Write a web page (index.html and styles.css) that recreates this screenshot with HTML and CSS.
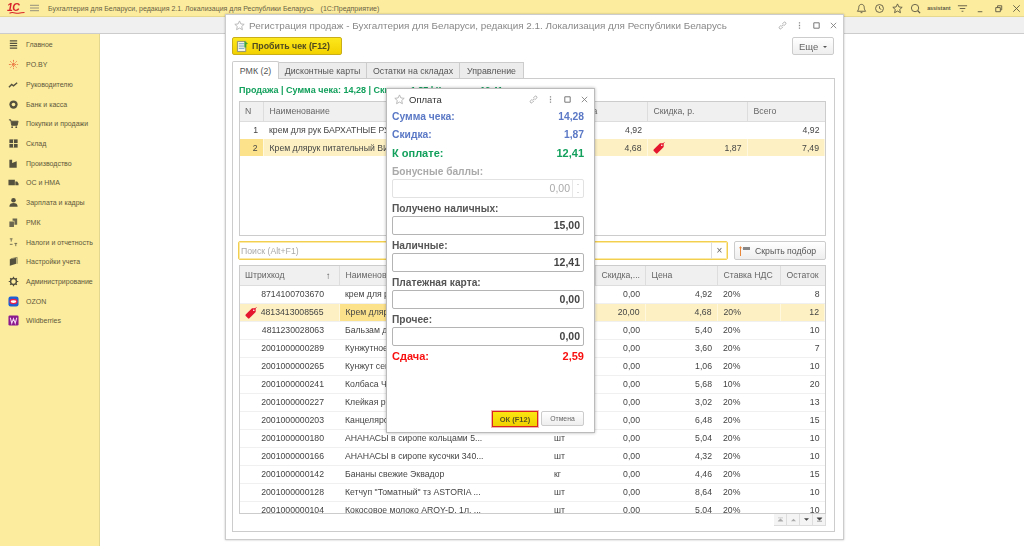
FILE: index.html
```html
<!DOCTYPE html>
<html lang="ru">
<head>
<meta charset="utf-8">
<title>Бухгалтерия для Беларуси</title>
<link rel="stylesheet" href="styles.css">
</head>
<body>
<svg class="defs" width="0" height="0">
  <defs>
    <symbol id="star" viewBox="0 0 12 12"><path d="M6 1l1.500 3.300 3.600.4-2.700 2.400.8 3.500L6 8.800l-3.200 1.800.8-3.500L.9 4.700l3.600-.4z" fill="none" stroke="#b5b5b5"/></symbol>
    <symbol id="link" viewBox="0 0 10 10"><path d="M4 6.200L6.200 4M3.600 4.600L1.700 6.500a1.300 1.300 0 0 0 1.900 1.900l1.900-1.900M4.600 3.500l1.900-1.900a1.300 1.300 0 0 1 1.900 1.900L6.500 5.400" fill="none" stroke="#a0a0a0" stroke-width=".9"/></symbol>
    <symbol id="more" viewBox="0 0 10 10"><path d="M4.300 1.500h1.400v1.400H4.300zM4.300 4.300h1.400v1.400H4.300zM4.300 7.100h1.400v1.400H4.300z" fill="#888"/></symbol>
    <symbol id="max" viewBox="0 0 10 10"><path d="M2 2h6v6H2z" fill="none" stroke="#777" stroke-width="1.100"/></symbol>
    <symbol id="close" viewBox="0 0 10 10"><path d="M2 2l6 6M8 2l-6 6" fill="none" stroke="#777" stroke-width=".9"/></symbol>
    <symbol id="tag" viewBox="0 0 12 12"><path d="M.7 7.600L7 1.300h3.700V5L4.400 11.300a1 1 0 0 1-1.400 0L.7 9a1 1 0 0 1 0-1.400z" fill="#e4172f"/><path d="M9 2.500L11.600.4" stroke="#e4172f" fill="none" stroke-width=".8"/><circle cx="8.800" cy="3.200" r=".8" fill="#fff"/></symbol>
  </defs>
</svg>

<header class="topbar">
  <div class="logo"><span class="logo-text">1С</span><svg class="logo-wave" viewBox="0 0 20 4"><path d="M0 3c5-3 8 1 12 0s5-1 8-1" fill="none" stroke="#d8232a" stroke-width="1.400"/></svg></div>
  <svg class="burger" viewBox="0 0 10 8"><path d="M0 1h10M0 4h10M0 7h10" stroke="#8a8678" stroke-width="1"/></svg>
  <span class="app-title">Бухгалтерия для Беларуси, редакция 2.1. Локализация для Республики Беларусь</span>
  <span class="app-sub">(1С:Предприятие)</span>
  <div class="top-tools">
    <svg class="ti" viewBox="0 0 12 12"><path d="M6 1.500c2 0 3 1.500 3 3.500 0 2 .8 3 1.500 4h-9c.7-1 1.500-2 1.500-4s1-3.500 3-3.500zM5 10.500h2" fill="none" stroke="#5f5a45"/></svg>
    <svg class="ti" viewBox="0 0 12 12"><circle cx="6" cy="6" r="4.300" fill="none" stroke="#5f5a45"/><path d="M6 3.500V6l2 1" fill="none" stroke="#5f5a45"/></svg>
    <svg class="ti" viewBox="0 0 12 12"><path d="M6 1l1.500 3.300 3.600.4-2.700 2.400.8 3.500L6 8.800l-3.200 1.800.8-3.500L.9 4.700l3.600-.4z" fill="none" stroke="#5f5a45"/></svg>
    <svg class="ti" viewBox="0 0 12 12"><circle cx="5.500" cy="5.500" r="4" fill="none" stroke="#5f5a45"/><path d="M8.500 8.500l2.500 2.500" stroke="#5f5a45" stroke-width="1.300"/></svg>
    <span class="user">assistant</span>
    <svg class="ti" viewBox="0 0 12 12"><path d="M1 3h10M3 6h6M5 9h2" stroke="#5f5a45"/></svg>
    <svg class="ti" viewBox="0 0 12 12"><path d="M3 9.500h5" stroke="#5f5a45"/></svg>
    <svg class="ti" viewBox="0 0 12 12"><path d="M3 5h5v4.500H3zM5 5V3h4.500v4.500H8" fill="none" stroke="#5f5a45"/></svg>
    <svg class="ti" viewBox="0 0 12 12"><path d="M2.500 2.500l7 7M9.500 2.500l-7 7" stroke="#5f5a45"/></svg>
  </div>
</header>
<div class="tabbar"></div>

<div class="main">
  <nav class="sidebar">
    <a class="nav"><svg viewBox="0 0 12 12"><path d="M2 2h8M2 4.700h8M2 7.300h8M2 10h8" stroke="#55513f" stroke-width="1.300"/></svg>Главное</a>
    <a class="nav"><svg viewBox="0 0 12 12"><path d="M6 1v10M1 6h10M2.500 2.500l7 7M9.500 2.500l-7 7" stroke="#e8683a" stroke-width=".9" stroke-dasharray="2 1"/></svg>PO.BY</a>
    <a class="nav"><svg viewBox="0 0 12 12"><path d="M1 9l3-3 2 1.500L10 4" fill="none" stroke="#55513f" stroke-width="1.500"/></svg>Руководителю</a>
    <a class="nav"><svg viewBox="0 0 12 12"><circle cx="6" cy="6" r="4.500" fill="#55513f"/><circle cx="6" cy="6" r="2" fill="#fbec9e"/></svg>Банк и касса</a>
    <a class="nav"><svg viewBox="0 0 12 12"><path d="M1 2h2l1 6h6l1-4.500H3.500" fill="#55513f" stroke="#55513f"/><circle cx="4.500" cy="10" r="1" fill="#55513f"/><circle cx="9" cy="10" r="1" fill="#55513f"/></svg>Покупки и продажи</a>
    <a class="nav"><svg viewBox="0 0 12 12"><path d="M1.500 1.500h9v9h-9z" fill="#55513f"/><path d="M1 6h10M6 1.500v9" stroke="#fbec9e"/></svg>Склад</a>
    <a class="nav"><svg viewBox="0 0 12 12"><path d="M1.500 10.500V2h3v3.500l5-2v7z" fill="#55513f"/></svg>Производство</a>
    <a class="nav"><svg viewBox="0 0 12 12"><path d="M.5 3h7v6h-7zM8 5h2l1.500 2v2H8z" fill="#55513f"/></svg>ОС и НМА</a>
    <a class="nav"><svg viewBox="0 0 12 12"><circle cx="6" cy="3.500" r="2.500" fill="#55513f"/><path d="M1.500 10.500c0-3 2-4 4.500-4s4.500 1 4.500 4z" fill="#55513f"/></svg>Зарплата и кадры</a>
    <a class="nav"><svg viewBox="0 0 12 12"><path d="M1.500 5h5v6h-5zM5 1.500h5v7H7V4H5z" fill="#6b6650"/></svg>РМК</a>
    <a class="nav"><svg viewBox="0 0 12 12"><path d="M2 2h3M3.500 2v3M7 7h3M8.500 7v3M2 8h3" stroke="#6b6650"/></svg>Налоги и отчетность</a>
    <a class="nav"><svg viewBox="0 0 12 12"><path d="M2 3.500l7-2v7l-7 2z" fill="#55513f"/><path d="M3 3l7-1.500v7" fill="none" stroke="#8d8860"/></svg>Настройки учета</a>
    <a class="nav"><svg viewBox="0 0 12 12"><circle cx="6" cy="6" r="3.200" fill="none" stroke="#55513f" stroke-width="1.600"/><path d="M6 .8v2M6 9.200v2M.8 6h2M9.200 6h2M2.300 2.300l1.400 1.400M8.300 8.300l1.400 1.400M9.700 2.300L8.300 3.700M3.700 8.300L2.300 9.700" stroke="#55513f" stroke-width="1.200"/></svg>Администрирование</a>
    <a class="nav"><svg viewBox="0 0 12 12"><rect x=".5" y=".5" width="11" height="11" rx="2.500" fill="#1d5fd6"/><ellipse cx="6" cy="6" rx="3.800" ry="2.200" fill="#fff" stroke="#e8204a" stroke-width="1.400"/></svg>OZON</a>
    <a class="nav"><svg viewBox="0 0 12 12"><rect x=".5" y=".5" width="11" height="11" rx="1.500" fill="#8c1a8f"/><path d="M2.500 3l1.600 6 1.900-5 1.900 5 1.600-6" fill="none" stroke="#f5d8f5" stroke-width="1.100"/></svg>Wildberries</a>
  </nav>
  <main class="desktop"></main>
</div>

<section class="window">
  <div class="win-head">
    <svg class="star"><use href="#star"/></svg>
    <span class="win-title">Регистрация продаж - Бухгалтерия для Беларуси, редакция 2.1. Локализация для Республики Беларусь</span>
    <div class="win-tools">
      <svg><use href="#link"/></svg><svg><use href="#more"/></svg><svg><use href="#max"/></svg><svg><use href="#close"/></svg>
    </div>
  </div>
  <div class="cmdbar">
    <button class="btn-main">
      <svg viewBox="0 0 14 14"><path d="M1.500 1.500h9v11h-9z" fill="#f4f3e6" stroke="#8b8a70"/><path d="M3 4h6M3 6.500h6M3 9h6" stroke="#6aa0c8"/><path d="M9 1l4 3-2 .5V8H9z" fill="#3fa535"/></svg>
      Пробить чек (F12)
    </button>
    <button class="btn-more">Еще <i class="caret"></i></button>
  </div>
  <div class="tabs">
    <span class="tab active">РМК (2)</span>
    <span class="tab t2">Дисконтные карты</span>
    <span class="tab t3">Остатки на складах</span>
    <span class="tab t4">Управление</span>
  </div>
  <div class="panel">
    <div class="summary">Продажа | Сумма чека: 14,28 | Скидка: 1,87 | К оплате: 12,41</div>
    <div class="grid grid-top">
      <table>
        <colgroup><col class="c-n"><col class="c-name"><col class="c-price"><col class="c-disc"><col></colgroup>
        <thead><tr><th>N</th><th>Наименование</th><th>Цена</th><th>Скидка, р.</th><th>Всего</th></tr></thead>
        <tbody>
          <tr><td class="r">1</td><td>крем для рук БАРХАТНЫЕ РУЧКИ</td><td class="r">4,92</td><td></td><td class="r">4,92</td></tr>
          <tr class="sel"><td class="r cur">2</td><td>Крем длярук питательный ВИТЭКС</td><td class="r">4,68</td><td class="r tagged"><svg class="tag"><use href="#tag"/></svg>1,87</td><td class="r">7,49</td></tr>
        </tbody>
      </table>
    </div>
    <div class="searchrow">
      <div class="search"><span class="ph">Поиск (Alt+F1)</span><span class="clear">×</span></div>
      <button class="btn-hide"><svg viewBox="0 0 12 10"><path d="M1.500 1v9" stroke="#e8863a"/><path d="M0 2.500l1.500-2 1.500 2" fill="none" stroke="#e8863a" stroke-width=".7"/><path d="M4 1h7v3H4z" fill="#888"/></svg>Скрыть подбор</button>
    </div>
    <div class="grid grid-bottom">
      <table>
        <colgroup><col class="b-code"><col class="b-name"><col class="b-unit"><col class="b-disc"><col class="b-price"><col class="b-vat"><col></colgroup>
        <thead><tr><th class="sorted">Штрихкод<span class="arrow">↑</span></th><th>Наименование</th><th>Ед.</th><th>Скидка,...</th><th>Цена</th><th>Ставка НДС</th><th>Остаток</th></tr></thead>
        <tbody>
          <tr><td class="r code">8714100703670</td><td>крем для рук БАРХАТНЫЕ РУЧКИ</td><td>шт</td><td class="r">0,00</td><td class="r">4,92</td><td>20%</td><td class="r">8</td></tr>
          <tr class="sel"><td class="r code tagged"><svg class="tag"><use href="#tag"/></svg>4813413008565</td><td class="cur">Крем длярук питательный</td><td>шт</td><td class="r">20,00</td><td class="r">4,68</td><td>20%</td><td class="r">12</td></tr>
          <tr><td class="r code">4811230028063</td><td>Бальзам для губ</td><td>шт</td><td class="r">0,00</td><td class="r">5,40</td><td>20%</td><td class="r">10</td></tr>
          <tr><td class="r code">2001000000289</td><td>Кунжутное масло</td><td>шт</td><td class="r">0,00</td><td class="r">3,60</td><td>20%</td><td class="r">7</td></tr>
          <tr><td class="r code">2001000000265</td><td>Кунжут семена</td><td>кг</td><td class="r">0,00</td><td class="r">1,06</td><td>20%</td><td class="r">10</td></tr>
          <tr><td class="r code">2001000000241</td><td>Колбаса Чоризо</td><td>шт</td><td class="r">0,00</td><td class="r">5,68</td><td>10%</td><td class="r">20</td></tr>
          <tr><td class="r code">2001000000227</td><td>Клейкая рисовая мука</td><td>шт</td><td class="r">0,00</td><td class="r">3,02</td><td>20%</td><td class="r">13</td></tr>
          <tr><td class="r code">2001000000203</td><td>Канцелярские товары</td><td>шт</td><td class="r">0,00</td><td class="r">6,48</td><td>20%</td><td class="r">15</td></tr>
          <tr><td class="r code">2001000000180</td><td>АНАНАСЫ в сиропе кольцами 5...</td><td>шт</td><td class="r">0,00</td><td class="r">5,04</td><td>20%</td><td class="r">10</td></tr>
          <tr><td class="r code">2001000000166</td><td>АНАНАСЫ в сиропе кусочки 340...</td><td>шт</td><td class="r">0,00</td><td class="r">4,32</td><td>20%</td><td class="r">10</td></tr>
          <tr><td class="r code">2001000000142</td><td>Бананы свежие Эквадор</td><td>кг</td><td class="r">0,00</td><td class="r">4,46</td><td>20%</td><td class="r">15</td></tr>
          <tr><td class="r code">2001000000128</td><td>Кетчуп "Томатный" тз ASTORIA ...</td><td>шт</td><td class="r">0,00</td><td class="r">8,64</td><td>20%</td><td class="r">10</td></tr>
          <tr><td class="r code">2001000000104</td><td>Кокосовое молоко  AROY-D, 1л. ...</td><td>шт</td><td class="r">0,00</td><td class="r">5,04</td><td>20%</td><td class="r">10</td></tr>
        </tbody>
      </table>
    </div>
    <div class="pager">
      <span class="pg dim"><svg viewBox="0 0 8 6"><path d="M1 1h6M1 5l3-3 3 3z" fill="#aaa" stroke="#aaa" stroke-width=".6"/></svg></span>
      <span class="pg dim"><svg viewBox="0 0 8 6"><path d="M1 5l3-3 3 3z" fill="#aaa"/></svg></span>
      <span class="pg"><svg viewBox="0 0 8 6"><path d="M1 1.500l3 3 3-3z" fill="#444"/></svg></span>
      <span class="pg"><svg viewBox="0 0 8 6"><path d="M1 5h6M1 1l3 3 3-3z" fill="#444" stroke="#444" stroke-width=".6"/></svg></span>
    </div>
  </div>
</section>

<section class="dialog">
  <div class="dlg-head">
    <svg class="star"><use href="#star"/></svg>
    <span class="dlg-title">Оплата</span>
    <div class="win-tools dlg-tools">
      <svg><use href="#link"/></svg><svg><use href="#more"/></svg><svg><use href="#max"/></svg><svg><use href="#close"/></svg>
    </div>
  </div>
  <div class="dlg-body">
    <div class="total blue"><span>Сумма чека:</span><span>14,28</span></div>
    <div class="total blue"><span>Скидка:</span><span>1,87</span></div>
    <div class="total green"><span>К оплате:</span><span>12,41</span></div>
    <label class="flabel muted">Бонусные баллы:</label>
    <div class="input disabled"><span>0,00</span><i class="spin"></i></div>
    <label class="flabel">Получено наличных:</label>
    <div class="input"><span>15,00</span></div>
    <label class="flabel">Наличные:</label>
    <div class="input"><span>12,41</span></div>
    <label class="flabel">Платежная карта:</label>
    <div class="input"><span>0,00</span></div>
    <label class="flabel">Прочее:</label>
    <div class="input"><span>0,00</span></div>
    <div class="total red"><span>Сдача:</span><span>2,59</span></div>
  </div>
  <div class="dlg-foot">
    <button class="btn-ok">ОК (F12)</button>
    <button class="btn-cancel">Отмена</button>
  </div>
</section>
</body>
</html>
```
FILE: styles.css
```css
* { box-sizing: border-box; }
html, body { margin: 0; height: 546px; overflow: hidden; }
body { font-family: "Liberation Sans", Arial, sans-serif; font-size: 9px; color: #444; background: #fff; display: flex; flex-direction: column; filter: blur(.3px); }
button { font-family: inherit; padding: 0; cursor: default; }
.defs { position: absolute; }

.topbar { height: 17px; flex: none; background: #fbec9e; border-bottom: 1px solid #e6d88f; display: flex; align-items: center; color: #6a6244; }
.logo { width: 30px; padding-left: 7px; position: relative; height: 16px; }
.logo-text { display: block; font-size: 10.5px; font-weight: bold; font-style: italic; color: #d8232a; line-height: 14px; letter-spacing: -.5px; }
.logo-wave { display: block; width: 16px; height: 3px; margin-top: -3px; margin-left: 2px; }
.burger { width: 9px; height: 8px; margin-right: 9px; }
.app-title { font-size: 7px; white-space: nowrap; }
.app-sub { margin-left: 7px; font-size: 7px; white-space: nowrap; }
.top-tools { margin-left: auto; display: flex; align-items: center; padding-right: 2.5px; gap: 7px; }
.ti { width: 11px; height: 11px; }
.user { font-size: 5.4px; font-weight: bold; color: #5f5a45; margin: 0 -1px; }

.tabbar { height: 17px; flex: none; background: #f0f0f0; border-bottom: 1px solid #ccc; }
.main { flex: 1; display: flex; min-height: 0; }
.sidebar { width: 100px; flex: none; background: #fbec9e; border-right: 1px solid #e3d68f; padding-top: 1px; }
.nav { display: flex; align-items: center; height: 19.72px; padding-left: 8px; gap: 7px; font-size: 7px; color: #5f583c; white-space: nowrap; }
.nav svg { width: 11px; height: 11px; flex: none; }
.desktop { flex: 1; background: #fff; }

.window { position: absolute; left: 225px; top: 14px; width: 619px; height: 526px; background: #fff; border: 1px solid #ccc; box-shadow: 0 0 2px rgba(0,0,0,.25); padding: 0 9px 0 6px; display: flex; flex-direction: column; }
.win-head { height: 20px; display: flex; align-items: center; }
.star { width: 11px; height: 11px; flex: none; margin-left: 2px; }
.win-title { margin-left: 4px; font-size: 9.9px; color: #888; white-space: nowrap; }
.win-tools { margin-left: auto; display: flex; gap: 8px; margin-right: -3.5px; }
.win-tools svg { width: 9px; height: 9px; }
.cmdbar { height: 18px; margin-top: 2px; display: flex; justify-content: space-between; }
.btn-main { width: 110px; height: 18px; background: linear-gradient(#fce81c, #f3d100); border: 1px solid #c9ae1a; border-radius: 2px; display: flex; align-items: center; gap: 3px; padding-left: 3px; font-size: 8.8px; font-weight: bold; color: #4f4a20; }
.btn-main svg { width: 13px; height: 13px; }
.btn-more { width: 42px; height: 18px; background: linear-gradient(#fff, #eee); border: 1px solid #ccc; border-radius: 2px; font-size: 9.5px; color: #666; }
.caret { display: inline-block; border: 2.5px solid transparent; border-top-color: #555; border-bottom: 0; vertical-align: middle; margin-left: 2px; }

.tabs { display: flex; height: 18px; margin-top: 6px; font-size: 8.8px; }
.tab { display: flex; align-items: center; justify-content: center; background: #ececec; border: 1px solid #ccc; border-left: 0; color: #555; height: 17px; margin-top: 1px; white-space: nowrap; }
.tab.active { width: 47px; height: 18px; margin-top: 0; background: #fff; border-left: 1px solid #ccc; border-bottom: 0; border-radius: 2px 2px 0 0; position: relative; z-index: 1; }
.t2 { width: 88px; }
.t3 { width: 93px; }
.t4 { width: 64px; }
.panel { width: 603px; height: 454px; border: 1px solid #ccc; margin-top: -1px; padding: 0 7px 0 6px; display: flex; flex-direction: column; }
.summary { height: 22px; line-height: 22px; font-size: 9px; font-weight: bold; color: #12a05c; white-space: nowrap; }

.grid { border: 1px solid #ccc; overflow: hidden; flex: none; width: 587px; }
.grid-top { height: 135px; }
.grid-bottom { height: 249px; }
table { border-collapse: collapse; table-layout: fixed; width: 585px; font-size: 8.7px; }
th { background: #f0f0f0; height: 19px; text-align: left; font-weight: normal; color: #666; padding: 0 5px 0 6px; border-right: 1px solid #ddd; border-bottom: 1px solid #ddd; white-space: nowrap; overflow: hidden; }
th:first-child { padding-left: 5px; }
th:last-child { border-right: 0; }
td { height: 18px; padding: 0 5px 0 6px; color: #444; white-space: nowrap; overflow: hidden; border-bottom: 1px solid #f0f0f0; }
.grid-top td { height: 17px; border-bottom: 0; }
.grid-top tbody tr:first-child td { height: 18px; }
.r { text-align: right; }
td.code { padding-right: 15px; }
.sel td { background: #fdf1c4; border-right: 1px solid #fff7de; }
td.cur, .sel td.cur { background: #fde28c; }
.tagged { position: relative; }
.tag { position: absolute; left: 5px; top: 3px; width: 12px; height: 12px; }
.c-n { width: 23px; }
.c-name { width: 307px; }
.c-price { width: 77px; }
.c-disc { width: 100px; }
.b-code { width: 99px; }
.b-name { width: 209px; }
.b-unit { width: 47px; }
.b-disc { width: 50px; }
.b-price { width: 72px; }
.b-vat { width: 63px; }
.sorted { position: relative; }
.arrow { position: absolute; right: 8px; top: 4px; color: #555; font-size: 9.5px; }

.searchrow { display: flex; height: 29px; padding-top: 5px; align-items: flex-start; gap: 6px; margin-left: -1px; }
.search { width: 490px; height: 19px; border: 1px solid #f2cf4f; box-shadow: inset 0 0 0 1px #fbe9a8; border-radius: 2px; display: flex; justify-content: space-between; align-items: center; padding-left: 2px; }
.ph { color: #aaa; font-size: 8.7px; }
.clear { width: 16px; height: 17px; border-left: 1px solid #ddd; text-align: center; line-height: 17px; color: #666; font-size: 10px; }
.btn-hide { width: 92px; height: 19px; background: linear-gradient(#fff, #eee); border: 1px solid #ccc; border-radius: 2px; font-size: 8.7px; color: #555; display: flex; align-items: center; gap: 4px; padding-left: 4px; }
.btn-hide svg { width: 12px; height: 10px; }
.pager { display: flex; justify-content: flex-end; width: 587px; }
.pg { width: 13px; height: 12px; background: #f4f4f4; border: 1px solid #ddd; border-top: 0; border-left: 0; display: flex; align-items: center; justify-content: center; }
.pg svg { width: 7px; height: 5px; }

.dialog { position: absolute; left: 386px; top: 88px; width: 209px; height: 345px; background: #fff; border: 1px solid #bbb; box-shadow: 0 0 3px rgba(0,0,0,.3); padding: 0 10px 0 5px; display: flex; flex-direction: column; }
.dlg-head { height: 21px; display: flex; align-items: center; }
.dlg-title { margin-left: 4px; font-size: 9.5px; color: #333; }
.dlg-tools { margin-right: -4.5px; }
.dlg-body { flex: 1; margin-top: -2px; }
.total { display: flex; justify-content: space-between; font-weight: bold; font-size: 10.3px; height: 18px; line-height: 18px; }
.blue { color: #5a78c5; }
.green { color: #12a05c; font-size: 11px; }
.red { color: #f81010; font-size: 11px; margin-top: 1px; }
.flabel { display: block; font-size: 10.2px; font-weight: bold; color: #555; height: 17px; line-height: 20px; }
.flabel.muted { color: #aaa; }
.input { height: 19px; width: 192px; border: 1px solid #b4b4b4; border-radius: 2px; text-align: right; padding-right: 3px; font-size: 10.5px; font-weight: bold; line-height: 17px; color: #444; margin-bottom: 1px; position: relative; }
.input.disabled { border-color: #e2e2e2; color: #aaa; font-weight: normal; padding-right: 13px; }
.spin { position: absolute; right: 0; top: 0; bottom: 0; width: 11px; border-left: 1px solid #e8e8e8; }
.spin::before, .spin::after { content: ""; position: absolute; left: 4px; border: 1.5px solid transparent; }
.spin::before { top: 4px; border-bottom-color: #bbb; border-top: 0; }
.spin::after { bottom: 4px; border-top-color: #bbb; border-bottom: 0; }
.dlg-foot { height: 21px; display: flex; justify-content: flex-end; gap: 3px; }
.btn-ok { width: 46px; height: 16px; background: linear-gradient(#fbe510, #f2d000); border: 1px solid #d8231f; outline: 1px solid rgba(216,35,31,.35); font-size: 7.5px; font-weight: bold; color: #5a5320; }
.btn-cancel { width: 43px; height: 15px; background: linear-gradient(#fff, #eee); border: 1px solid #ccc; border-radius: 2px; font-size: 6.8px; color: #666; }
```
